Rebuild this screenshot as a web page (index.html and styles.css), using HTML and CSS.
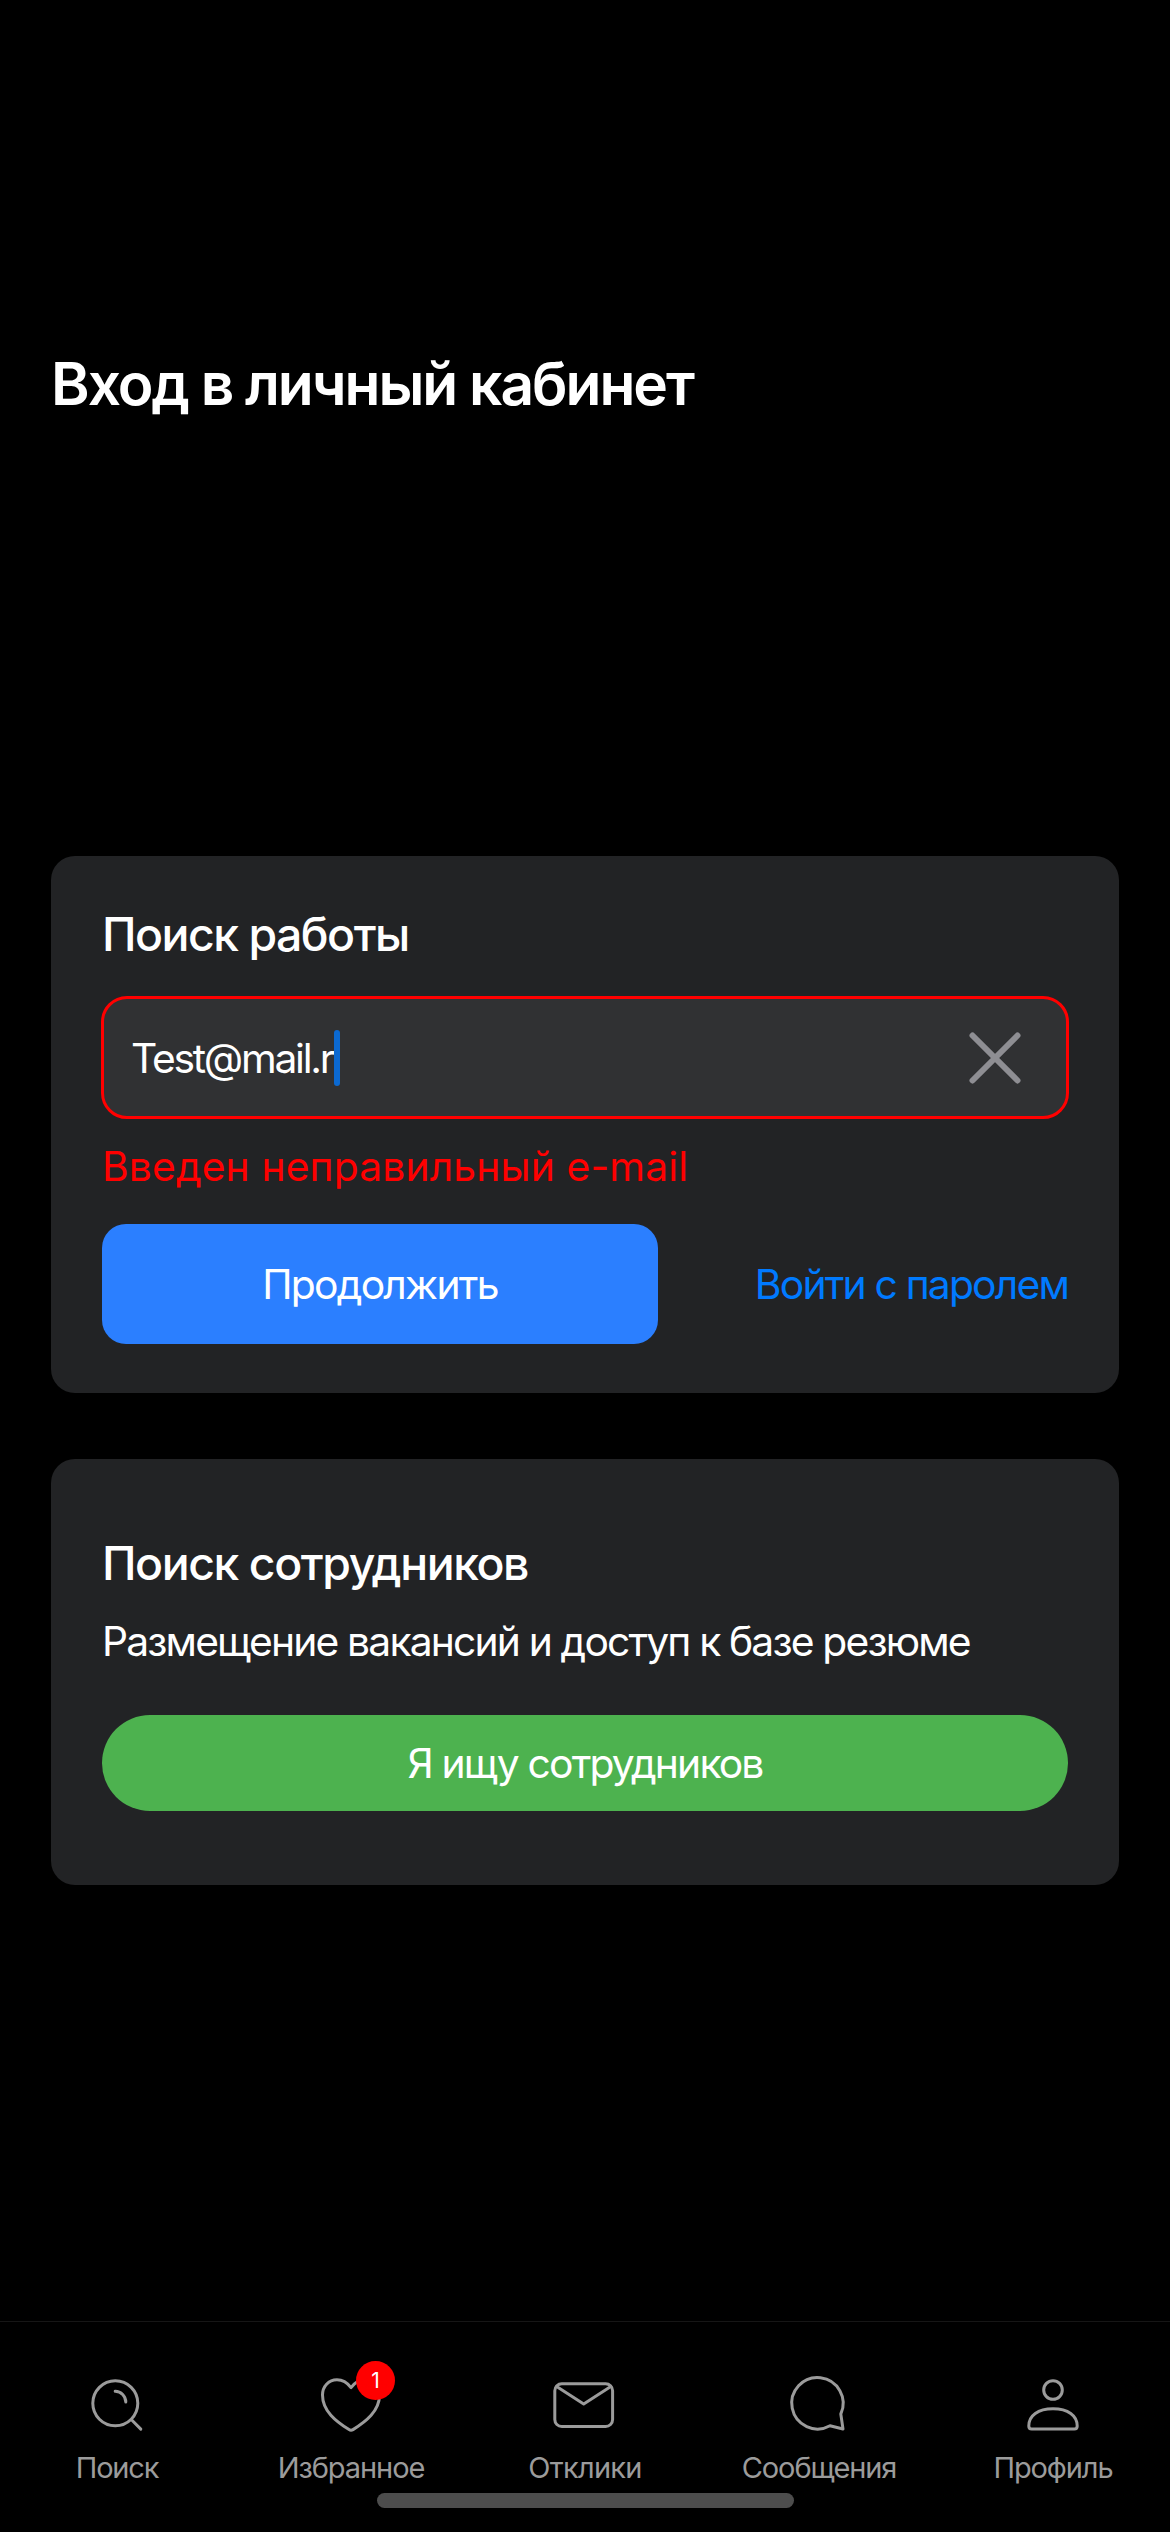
FILE: index.html
```html
<!DOCTYPE html>
<html lang="ru">
<head>
<meta charset="utf-8">
<title>Вход в личный кабинет</title>
<link rel="stylesheet" href="styles.css">
</head>
<body>
<div class="screen">
  <header class="header">
    <h1 class="title">Вход в личный кабинет</h1>
  </header>
  <main class="content">
    <section class="card card-login">
      <h2 class="card-title card-title-login">Поиск работы</h2>
      <div class="field">
        <span class="field-value">Test@mail.r</span><span class="caret"></span>
        <svg class="clear" viewBox="0 0 52 52"><path d="M3.5 3.5 48.5 48.5M48.5 3.5 3.5 48.5"/></svg>
      </div>
      <p class="error">Введен неправильный e-mail</p>
      <div class="actions">
        <button class="continue">Продолжить</button>
        <a class="password-link">Войти с паролем</a>
      </div>
    </section>
    <section class="card card-employer">
      <h2 class="card-title">Поиск сотрудников</h2>
      <p class="description">Размещение вакансий и доступ к базе резюме</p>
      <button class="employer">Я ищу сотрудников</button>
    </section>
  </main>
  <nav class="tabbar">
    <a class="tab">
      <svg class="icon" viewBox="0 0 72 72"><circle cx="34.3" cy="35.3" r="22.5"/><path d="M51 52.3 59.8 61.1M34.2 23.2A10.8 10.8 0 0 1 44.8 34"/></svg>
      <span class="label label-search">Поиск</span>
    </a>
    <a class="tab">
      <span class="icon-wrap">
        <svg class="icon" viewBox="0 0 72 72"><path d="M36 19.6C32 14.4 28 11.8 22 11.8 13.5 11.8 7.5 18.5 7.5 27 7.5 43 21 53.5 34 61.6Q36 62.8 38 61.6C51 53.5 64.5 43 64.5 27 64.5 18.5 58.5 11.8 50 11.8 44 11.8 40 14.4 36 19.6Z"/></svg>
        <span class="badge">1</span>
      </span>
      <span class="label">Избранное</span>
    </a>
    <a class="tab">
      <svg class="icon" viewBox="0 0 72 72"><rect x="5.8" y="15.7" width="57.8" height="42.8" rx="7"/><path d="M7.6 18.5 34.7 35.9 61.8 18.5"/></svg>
      <span class="label label-responses">Отклики</span>
    </a>
    <a class="tab">
      <svg class="icon" viewBox="0 0 72 72"><path d="M57.8 46 60 61 47 57.7A25.7 25.7 0 1 1 57.8 46Z"/></svg>
      <span class="label">Сообщения</span>
    </a>
    <a class="tab">
      <svg class="icon" viewBox="0 0 72 72"><circle cx="36" cy="22" r="9.3"/><path d="M11.8 58C11.8 47.5 21 40.8 36 40.8S60.2 47.5 60.2 58Q60.2 61.1 57.3 61.1H14.7Q11.8 61.1 11.8 58Z"/></svg>
      <span class="label">Профиль</span>
    </a>
    <div class="home-indicator"></div>
  </nav>
</div>
</body>
</html>
```
FILE: styles.css
```css
* {
  box-sizing: border-box;
}

body {
  margin: 0;
  background: #000;
  color: #fff;
  font-family: Inter, "Noto Sans", sans-serif;
}

h1, h2, p {
  margin: 0;
}

button {
  border: 0;
  padding: 0;
  color: #fff;
  font: inherit;
}

.screen {
  display: flex;
  flex-direction: column;
  width: 1170px;
  height: 2532px;
  overflow: hidden;
}

.header {
  height: 856px;
  padding: 348px 51px 0;
}

.title {
  font-size: 58.7px;
  font-weight: 600;
  line-height: 72px;
  letter-spacing: -2.03px;
  white-space: nowrap;
}

.content {
  display: flex;
  flex: 1;
  flex-direction: column;
  gap: 66px;
  padding: 0 51px;
}

.card {
  display: flex;
  flex-direction: column;
  border-radius: 24px;
  background: #222325;
  font-size: 40.8px;
  line-height: 50px;
  white-space: nowrap;
}

.card-login {
  height: 537px;
  padding: 50px 50px 49px;
}

.card-employer {
  height: 426px;
  padding: 76px 51px 74px;
}

.card-title {
  font-size: 46.4px;
  font-weight: 500;
  line-height: 56px;
  letter-spacing: -1.42px;
}

.card-title-login {
  padding-left: 1px;
  letter-spacing: -1.5px;
}

.field {
  display: flex;
  align-items: center;
  height: 123px;
  margin-top: 34px;
  padding: 0 45px 0 27px;
  border: 3px solid #ff0000;
  border-radius: 26px;
  background: #303133;
}

.field-value {
  letter-spacing: -2.25px;
}

.caret {
  width: 6px;
  height: 56px;
  margin-left: 1px;
  border-radius: 3px;
  background: #0b69d1;
}

.clear {
  width: 52px;
  height: 52px;
  margin-left: auto;
  fill: none;
  stroke: #8e8e93;
  stroke-width: 6;
  stroke-linecap: round;
}

.error {
  margin-top: 22px;
  padding-left: 1px;
  color: #ff0000;
  letter-spacing: 0.13px;
}

.actions {
  display: flex;
  align-items: center;
  justify-content: space-between;
  margin-top: 33px;
  padding: 0 1px;
}

.continue {
  width: 556px;
  height: 120px;
  border-radius: 24px;
  background: #2b7fff;
  letter-spacing: -1.75px;
}

.password-link {
  color: #007aff;
  letter-spacing: -1.81px;
}

.description {
  margin-top: 25px;
  letter-spacing: -1.84px;
}

.employer {
  height: 96px;
  margin-top: 49px;
  padding-bottom: 1px;
  border-radius: 48px;
  background: #4db24f;
  letter-spacing: -1.84px;
}

.tabbar {
  position: relative;
  display: grid;
  grid-template-columns: repeat(5, 1fr);
  height: 211px;
  padding-top: 46px;
  border-top: 1px solid #161616;
}

.tab {
  display: flex;
  flex-direction: column;
  align-items: center;
  gap: 10px;
}

.icon {
  display: block;
  width: 72px;
  height: 72px;
  fill: none;
  stroke: #9b9b9b;
  stroke-width: 3;
  stroke-linecap: round;
  stroke-linejoin: round;
}

.icon-wrap {
  position: relative;
}

.badge {
  position: absolute;
  top: -7px;
  left: 41px;
  width: 39px;
  height: 39px;
  border-radius: 50%;
  background: #ff0000;
  font-size: 21px;
  line-height: 39px;
  text-align: center;
}

.label {
  color: #9b9b9b;
  font-size: 29px;
  line-height: 36px;
  letter-spacing: -1.08px;
}

.label-search {
  letter-spacing: -1.2px;
}

.label-responses {
  letter-spacing: -0.75px;
}

.home-indicator {
  position: absolute;
  bottom: 24px;
  left: 377px;
  width: 417px;
  height: 15px;
  border-radius: 7.5px;
  background: #4d4d4d;
}
```
